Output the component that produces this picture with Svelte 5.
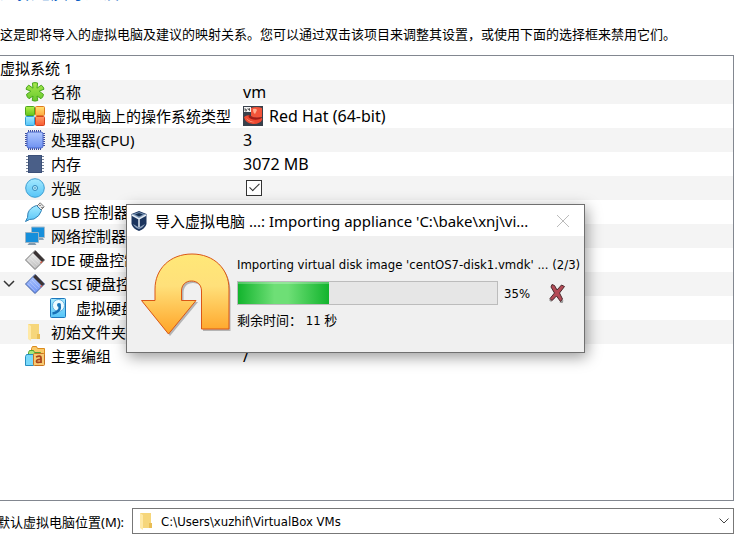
<script>
  const rows = [
    { icon: 'name', label: '名称', value: 'vm' },
    { icon: 'os', label: '虚拟电脑上的操作系统类型', value: 'Red Hat (64-bit)', valueIcon: true },
    { icon: 'cpu', label: '处理器(CPU)', value: '3' },
    { icon: 'ram', label: '内存', value: '3072 MB' },
    { icon: 'cd', label: '光驱', check: true },
    { icon: 'usb', label: 'USB 控制器', check: true },
    { icon: 'net', label: '网络控制器', value: '' },
    { icon: 'ide', label: 'IDE 硬盘控制器', value: '' },
    { icon: 'scsi', label: 'SCSI 硬盘控制器', value: '', open: true },
    { icon: 'disk', label: '虚拟硬盘', value: '', child: true },
    { icon: 'folder', label: '初始文件夹', value: '' },
    { icon: 'group', label: '主要编组', value: '/' }
  ];
  const progress = 35;
</script>

{#snippet folder()}
  <path d="M3 2h11v15H3z" fill="#f6d67b" />
  <path d="M3 2l3 2v15l-3-2z" fill="#ffe9a6" />
  <path d="M12 12h3v5h-3z" fill="#e9bd55" />
{/snippet}

{#snippet icon(kind)}
  <svg class="icon" viewBox="0 0 20 20" aria-hidden="true">
    {#if kind === 'name'}
      <path d="M7.400 1Q10 .2 12.600 1L12 6.200l4.200-3q2.300 1.200 2.800 4L14.200 9.200l4.300 3.200q-.3 2.800-2.500 4.300L12 14l.8 4.500q-2.800 1.200-5.600 0L8 14l-4 2.700q-2.200-1.500-2.500-4.300L5.800 9.200 1 7.200q.5-2.800 2.800-4L8 6.200z" fill="url(#gGreen)" stroke="#48a51c" />
    {:else if kind === 'os'}
      <rect x=".5" y=".5" width="9" height="9" rx="1" fill="url(#gLime)" stroke="#4da51e" />
      <rect x="10.500" y=".5" width="9" height="9" rx="1" fill="url(#gYellow)" stroke="#e07b20" />
      <rect x=".5" y="10.500" width="9" height="9" rx="1" fill="url(#gCyan)" stroke="#2e9bd4" />
      <rect x="10.500" y="10.500" width="9" height="9" rx="1" fill="url(#gRed)" stroke="#d8431c" />
    {:else if kind === 'cpu'}
      <path d="M3 1h14M3 19h14M1 3v14M19 3v14" stroke="#3e4d9c" stroke-width="2" stroke-dasharray="1 1" />
      <rect x="2" y="2" width="16" height="16" rx="2" fill="url(#gBlue)" stroke="#4a66c8" />
    {:else if kind === 'ram'}
      <path d="M1 2.500h18M1 5.500h18M1 8.500h18M1 11.500h18M1 14.500h18M1 17.500h18" stroke="#77849b" />
      <rect x="3.500" y="1.500" width="13" height="17" fill="#4a5f88" stroke="#3c5078" />
    {:else if kind === 'cd'}
      <circle cx="10" cy="10" r="9.300" fill="url(#gCyan)" stroke="#3b9dd2" />
      <circle cx="10" cy="10" r="2.500" fill="#b8efff" stroke="#3289bd" />
      <circle cx="10" cy="10" r=".8" fill="#2878ac" />
    {:else if kind === 'usb'}
      <path d="M11.500 4.500l3.700-3.700 4 4-3.700 3.700z" fill="#e8e8e8" stroke="#777" />
      <path d="M14.500 3l1 1M16.500 5l1 1" stroke="#333" />
      <path d="M11.500 3.500Q5 5.500 3 11l-.5 4.500L.5 19.500l4-2L9 17q5.500-2.500 7.500-8.500z" fill="url(#gCyan)" stroke="#3180b5" />
    {:else if kind === 'net'}
      <path d="M6.500 1h13v10.500h-13z" fill="#168fdb" stroke="#a8bccb" />
      <path d="M13 12h5l1 2h-5z" fill="#8aa4b8" />
      <path d="M.5 6.500h13v10H.5z" fill="#168fdb" stroke="#9bb4c5" />
      <path d="M4 17h6l1.500 2h-9z" fill="#7f99ae" />
    {:else if kind === 'ide' || kind === 'scsi'}
      <path d="M10 .5L19.500 10 10 19.500.5 10z" fill={kind === 'ide' ? 'url(#gGray)' : 'url(#gBlue)'} stroke={kind === 'ide' ? '#777' : '#4060a5'} />
      <path d="M3 10l7 7M5 8l7 7M7 6l7 7" stroke="#fff" stroke-width=".5" opacity=".5" />
      <path d="M10.500.500l9 9.500-2.500 2-9-9z" fill="#3a3334" />
      <path d="M15.500 13l1.500-1.500" stroke="#d65845" stroke-width="1.500" />
    {:else if kind === 'disk'}
      <rect x=".5" y=".5" width="15" height="19" rx="1" fill="url(#gCyan)" stroke="#1d78bd" />
      <circle cx="8.500" cy="7.500" r="6" fill="#ecfaff" stroke="#5eb1df" />
      <circle cx="9" cy="7" r="2" fill="#1775bc" />
      <path d="M9.500 8q1 3-1.500 5-2 2-5.500 2.500" fill="none" stroke="#1670b5" stroke-width="2.500" />
    {:else if kind === 'folder'}
      {@render folder()}
    {:else}
      <path d="M6.500 2.500l1-2h4l1 2h7v10h-13z" fill="#f9c967" stroke="#dc8b1d" />
      <path d="M3.500 6.500l1-2h4l1 2h6v8h-12z" fill="#a5e77c" stroke="#55a22d" />
      <path d="M.5 10.500l1-2h7v11h-8z" fill="#79d9fa" stroke="#278fc1" />
      <rect x="8.500" y="7.500" width="11" height="12" rx="1" fill="#f7ca73" stroke="#c97422" />
      <path d="M11 11q5-2 5 1v5M16 13.500q-4.500-.3-4.500 1.700t4.500.8" fill="none" stroke="#a9441d" stroke-width="1.800" />
    {/if}
  </svg>
{/snippet}

<svg class="defs" width="0" height="0" aria-hidden="true">
  <defs>
    <linearGradient id="gGreen" x2="0" y2="1"><stop stop-color="#a8e84c" /><stop offset="1" stop-color="#66c92e" /></linearGradient>
    <linearGradient id="gLime" x2="0" y2="1"><stop stop-color="#b4f04a" /><stop offset="1" stop-color="#62c51c" /></linearGradient>
    <linearGradient id="gYellow" x2="0" y2="1"><stop stop-color="#ffe273" /><stop offset="1" stop-color="#ffa943" /></linearGradient>
    <linearGradient id="gCyan" x2="0" y2="1"><stop stop-color="#a5eaff" /><stop offset="1" stop-color="#55c4f7" /></linearGradient>
    <linearGradient id="gRed" x2="0" y2="1"><stop stop-color="#ff9b66" /><stop offset="1" stop-color="#f75b32" /></linearGradient>
    <linearGradient id="gBlue" x2="0" y2="1"><stop stop-color="#b0c8ff" /><stop offset="1" stop-color="#6f92f2" /></linearGradient>
    <linearGradient id="gGray" x2="0" y2="1"><stop stop-color="#f4f4f4" /><stop offset="1" stop-color="#bcbcbc" /></linearGradient>
    <linearGradient id="gArrow" x2="0" y2="1"><stop stop-color="#ffe878" /><stop offset=".4" stop-color="#ffe07a" /><stop offset="1" stop-color="#ffa326" /></linearGradient>
  </defs>
</svg>

<main>
  <header><h1>虚拟电脑导入设置</h1></header>
  <p class="intro">这是即将导入的虚拟电脑及建议的映射关系。您可以通过双击该项目来调整其设置，或使用下面的选择框来禁用它们。</p>

  <section class="tree">
    <table>
      <colgroup><col class="names" /><col /></colgroup>
      <tbody>
        <tr><th colspan="2" scope="colgroup">虚拟系统 1</th></tr>
        {#each rows as row}
          <tr>
            <td>
              <div class="cell name" class:child={row.child}>
                {#if !row.child}
                  <span class="twist">
                    {#if row.open}
                      <svg width="12" height="8" viewBox="0 0 12 8" aria-hidden="true"><path d="M1 1l5 5 5-5" fill="none" stroke="#333" stroke-width="1.500" /></svg>
                    {/if}
                  </span>
                {/if}
                {@render icon(row.icon)}
                <span>{row.label}</span>
              </div>
            </td>
            <td>
              <div class="cell value">
                {#if row.check}
                  <input type="checkbox" checked aria-label={row.label} />
                {:else}
                  {#if row.valueIcon}
                    <svg class="icon" viewBox="0 0 20 20" aria-hidden="true">
                      <path d="M0 0h20v20H0z" fill="#39414c" />
                      <path d="M8 2q6-2 11 0v9q-6 2-11-1z" fill="#f2543a" />
                      <path d="M1 11q4-3 6-1 5 3 10 1 3 1 2 3-2 4-9 4-8-1-9-7z" fill="#ef4a32" />
                      <path d="M6 9q4 4 12 2l-.5 2Q9 15 5.500 11z" fill="#9f1c16" />
                      <path d="M10 3q3-1 4 1l-2 4q-2-1-2-5zM3 12q4 4 9 4-6 1-9-4z" fill="#ffae90" />
                      <path d="M1 1h7v5H1z" fill="#f4f4f4" />
                      <path d="M2 2v3h1.500V3.500H2M5 2v1.500h2M6.500 2v3" fill="none" stroke="#444" stroke-width=".7" />
                    </svg>
                  {/if}
                  <span>{row.value}</span>
                {/if}
              </div>
            </td>
          </tr>
        {/each}
      </tbody>
    </table>
  </section>

  <footer>
    <label for="location">默认虚拟电脑位置(M):</label>
    <div class="combo">
      <svg class="icon" viewBox="0 0 20 20" aria-hidden="true">{@render folder()}</svg>
      <select id="location"><option>C:\Users\xuzhif\VirtualBox VMs</option></select>
      <svg class="arrow" width="10" height="6" viewBox="0 0 10 6" aria-hidden="true"><path d="M.5.5L5 5 9.500.5" fill="none" stroke="#444" /></svg>
    </div>
  </footer>
</main>

<div class="dialog" role="dialog" aria-labelledby="dialog-title">
  <div class="titlebar">
    <svg width="16" height="20" viewBox="0 0 16 20" aria-hidden="true">
      <path d="M8 0l7.500 3v10Q14 18 8 20 2 18 .5 13V3z" fill="#1c355e" />
      <path d="M1 3.500L8 1l7 2.500L8 7.500z" fill="#7893b5" />
      <path d="M4 3.500L8 2l4 1.500-4 2z" fill="#173052" />
      <path d="M1 4l7 4 7-4M8 8v8" fill="none" stroke="#e4ecf4" stroke-width="1.500" />
      <path d="M2 13q2 4 6 5 4-1 6-5l-6 3.500z" fill="#8fa4be" />
    </svg>
    <span id="dialog-title">导入虚拟电脑 ...: Importing appliance 'C:\bake\xnj\vi...</span>
    <button class="close" aria-label="关闭">
      <svg width="14" height="14" viewBox="0 0 14 14"><path d="M1 1l12 12M13 1L1 13" stroke="#bbb" /></svg>
    </button>
  </div>
  <div class="body">
    <svg class="import" width="94" height="86" viewBox="0 0 94 86" aria-hidden="true">
      <path d="M3 49h14V38C17 18 32 3 54 3s36.500 15 36.500 35v40H63V40c0-6-4-10-10-10s-9.500 4-9.500 10v9H58L30 83z" fill="#777" opacity=".5" />
      <path d="M1.500 47.500h13.500V36C15 16 30 1 52 1s37 15 37 35v40H61.500V38c0-6-4-10-10-10s-10 4-10 10v9.500H56L28.500 81z" fill="url(#gArrow)" stroke="#db5716" />
    </svg>
    <div class="status">
      <div class="line">Importing virtual disk image 'centOS7-disk1.vmdk' ... (2/3)</div>
      <div class="progress">
        <progress max="100" value={progress} aria-label="导入进度"></progress>
        <span>{progress}%</span>
        <button class="cancel" aria-label="取消">
          <svg width="18" height="20" viewBox="0 0 18 20">
            <path d="M2 18l4-4M12 18l3 1" stroke="#999" stroke-width="3" />
            <path d="M4 1.500l2.500 1L9 7l4.500-5 3 1.500L11.500 10l3 6-2 2.500L8.500 13 4 17.500l-2-2L6.500 10 3 4z" fill="#b34a55" stroke="#4d292d" />
          </svg>
        </button>
      </div>
      <div class="line">剩余时间： 11 秒</div>
    </div>
  </div>
</div>

<style>
  :global(body) {
    margin: 0;
    background: #fff;
    overflow: hidden;
  }
  main, .dialog {
    color: #000;
    font-family: "Noto Sans", "Noto Sans CJK SC", sans-serif;
    font-size: 13px;
  }
  main {
    display: flex;
    flex-direction: column;
    height: 100vh;
  }
  .defs {
    position: absolute;
  }
  header {
    height: 2px;
    overflow: hidden;
    display: flex;
    align-items: flex-end;
  }
  h1 {
    margin: 0;
    font-size: 17px;
    line-height: 18px;
    font-weight: 400;
    color: #0a5fc4;
    white-space: nowrap;
  }
  .intro {
    margin: 22px 0 11px;
    line-height: 20px;
    white-space: nowrap;
  }
  .tree {
    flex: 1;
    margin-right: 8px;
    border: 1px solid #828790;
    border-left: 0;
  }
  table {
    width: 100%;
    table-layout: fixed;
    border-collapse: collapse;
    font-size: 15px;
    line-height: 24px;
  }
  .names {
    width: 243px;
  }
  th, td {
    padding: 0;
    font-weight: 400;
    text-align: left;
    white-space: nowrap;
  }
  tr:nth-child(even) {
    background: #f4f4f4;
  }
  .cell {
    display: flex;
    align-items: center;
    gap: 6px;
    height: 24px;
  }
  .name {
    overflow: hidden;
  }
  .value {
    font-size: 16px;
  }
  .child {
    padding-left: 50px;
  }
  .twist {
    display: flex;
    width: 16px;
    padding-left: 3px;
  }
  .icon {
    width: 20px;
    height: 20px;
    flex: none;
  }
  input {
    appearance: none;
    display: flex;
    justify-content: center;
    box-sizing: border-box;
    width: 16px;
    height: 16px;
    margin: 0 3px;
    border: 1px solid #333;
    background: #fff;
  }
  input:checked::before {
    content: "";
    width: 4px;
    height: 9px;
    border: solid #333;
    border-width: 0 1px 1px 0;
    transform: rotate(45deg);
  }
  footer {
    display: flex;
    align-items: center;
    gap: 8px;
    margin: 7px 8px 6px 0;
  }
  label {
    margin-left: -3px;
    white-space: nowrap;
  }
  .combo {
    flex: 1;
    display: flex;
    align-items: center;
    height: 24px;
    padding: 0 4px;
    border: 1px solid #777;
  }
  select {
    appearance: none;
    flex: 1;
    min-width: 0;
    padding: 0 4px;
    border: 0;
    background: none;
    color: #000;
    font-family: "DejaVu Sans Condensed", "Noto Sans CJK SC", sans-serif;
    font-size: 13px;
  }
  .arrow {
    pointer-events: none;
  }
  .dialog {
    position: absolute;
    left: 126px;
    top: 204px;
    width: 457px;
    border: 1px solid #707070;
    background: #f0f0f0;
    box-shadow: 2px 4px 14px rgba(0, 0, 0, 0.4);
  }
  .titlebar {
    display: flex;
    align-items: center;
    gap: 8px;
    height: 31px;
    padding: 0 14px 0 4px;
    background: #fff;
    font-size: 15px;
    line-height: 20px;
    white-space: nowrap;
  }
  button {
    display: flex;
    padding: 0;
    border: 0;
    background: none;
  }
  .close {
    margin-left: auto;
  }
  .body {
    display: flex;
    gap: 3px;
    padding: 17px 12px 13px 13px;
    font-family: "DejaVu Sans Condensed", "Noto Sans CJK SC", sans-serif;
  }
  .import {
    flex: none;
  }
  .status {
    flex: 1;
    min-width: 0;
    display: flex;
    flex-direction: column;
    gap: 5px;
    padding-top: 1px;
  }
  .line {
    line-height: 22px;
    white-space: nowrap;
  }
  .progress {
    display: flex;
    align-items: center;
    gap: 6px;
  }
  progress {
    appearance: none;
    box-sizing: border-box;
    width: 261px;
    height: 24px;
    border: 1px solid #bcbcbc;
  }
  progress::-webkit-progress-bar {
    background: #e6e6e6;
  }
  progress::-webkit-progress-value {
    background: linear-gradient(rgba(255, 255, 255, 0.25) 2px, transparent 2px),
      linear-gradient(90deg, #12b42d, #6edf76 40%, #6edf76 55%, #12b42d);
  }
  .cancel {
    margin: 0 6px 0 auto;
  }
</style>
